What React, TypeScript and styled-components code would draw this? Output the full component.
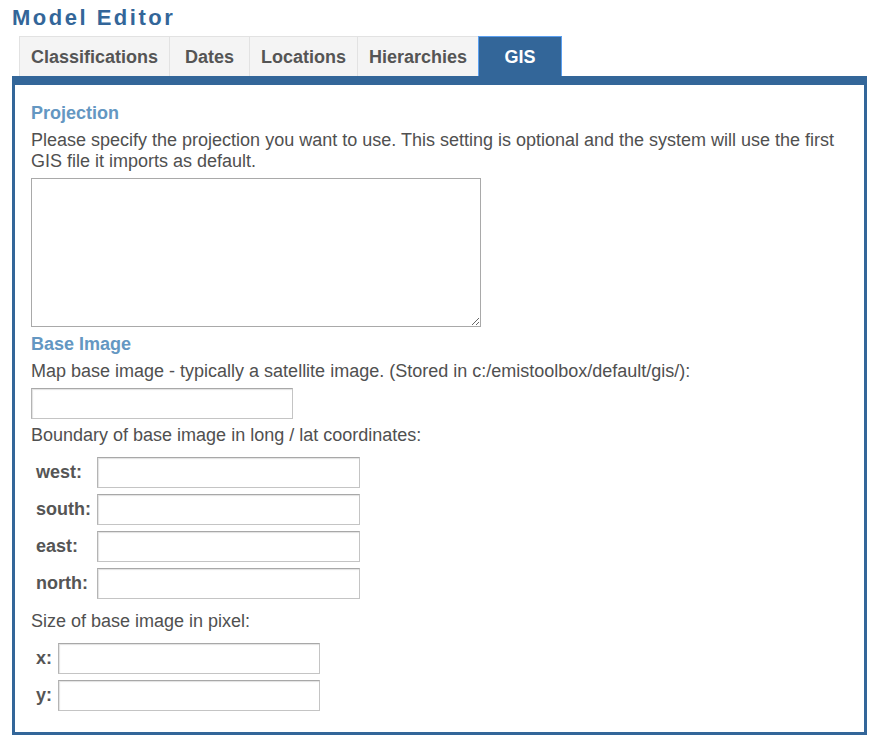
import { useState } from "react";
import styled, { createGlobalStyle } from "styled-components";

const GlobalStyle = createGlobalStyle`
  body {
    margin: 0;
    background: #fff;
    font-family: "Liberation Sans", Arial, sans-serif;
  }
`;

const TABS = ["Classifications", "Dates", "Locations", "Hierarchies", "GIS"];

const BOUNDS = ["west", "south", "east", "north"];
const SIZE = ["x", "y"];

export default function App() {
  const [activeTab, setActiveTab] = useState<string>("GIS");

  return (
    <>
      <GlobalStyle />
      <StyledPage>
        <Title>Model Editor</Title>
        <TabBar>
          {TABS.map((tab) => (
            <Tab key={tab} $active={tab === activeTab} onClick={() => setActiveTab(tab)}>
              {tab}
            </Tab>
          ))}
        </TabBar>
        <Panel>
          <Heading>Projection</Heading>
          <Text>
            Please specify the projection you want to use. This setting is optional and the system
            will use the first GIS file it imports as default.
          </Text>
          <Area />
          <Heading>Base Image</Heading>
          <Text>
            Map base image - typically a satellite image. (Stored in c:/emistoolbox/default/gis/):
          </Text>
          <Field type="text" $width={262} />
          <Text>Boundary of base image in long / lat coordinates:</Text>
          <FieldTable>
            <tbody>
              {BOUNDS.map((name) => (
                <tr key={name}>
                  <LabelCell>{name}:</LabelCell>
                  <InputCell>
                    <Field type="text" $width={263} />
                  </InputCell>
                </tr>
              ))}
            </tbody>
          </FieldTable>
          <Text className="spaced">Size of base image in pixel:</Text>
          <FieldTable>
            <tbody>
              {SIZE.map((name) => (
                <tr key={name}>
                  <LabelCell>{name}:</LabelCell>
                  <InputCell>
                    <Field type="text" $width={262} />
                  </InputCell>
                </tr>
              ))}
            </tbody>
          </FieldTable>
        </Panel>
      </StyledPage>
    </>
  );
}

const StyledPage = styled.div`
  padding: 0 0 0 12px;
  width: 855px;
`;

const Title = styled.div`
  font-size: 22px;
  font-weight: 700;
  line-height: 36px;
  letter-spacing: 2.5px;
  color: #336699;
`;

const TabBar = styled.div`
  display: flex;
  padding-left: 7px;
  height: 40px;
`;

const Tab = styled.div<{ $active?: boolean }>`
  box-sizing: border-box;
  min-width: ${(p) => (p.$active ? 84 : 81)}px;
  height: 40px;
  padding: 0 11px;
  margin-right: -1px;
  border: 1px solid ${(p) => (p.$active ? "#5a9ff0" : "#e2e2e2")};
  border-bottom: none;
  background: ${(p) => (p.$active ? "#336699" : "#f4f4f4")};
  color: ${(p) => (p.$active ? "#fff" : "#555")};
  font-size: 18px;
  font-weight: 700;
  line-height: 40px;
  text-align: center;
  overflow: hidden;
  cursor: pointer;
  position: relative;
  z-index: ${(p) => (p.$active ? 1 : 0)};
`;

const Panel = styled.div`
  box-sizing: border-box;
  width: 855px;
  border: 3px solid #336699;
  border-top-width: 9px;
  padding: 18px 16px 18px;
`;

const Heading = styled.div`
  font-size: 18px;
  font-weight: 700;
  line-height: 21px;
  color: #6497c2;
  margin-bottom: 6px;
`;

const Text = styled.p`
  margin: 0 0 6px;
  font-size: 18px;
  line-height: 21px;
  color: #505050;
  &.spaced {
    margin-top: 9px;
  }
`;

const Area = styled.textarea`
  display: block;
  box-sizing: border-box;
  width: 450px;
  height: 149px;
  margin: 0 0 7px;
  border: 1px solid #a9a9a9;
  font-family: "Liberation Sans", Arial, sans-serif;
  font-size: 16px;
`;

const Field = styled.input<{ $width: number }>`
  display: block;
  box-sizing: border-box;
  width: ${(p) => p.$width}px;
  height: 31px;
  margin: 0 0 6px;
  border: 1px solid #c4c4c4;
  border-top-color: #a8a8a8;
  border-left-color: #b4b4b4;
  box-shadow: inset 1px 1px 1px #e2e2e2;
  font-family: "Liberation Sans", Arial, sans-serif;
  font-size: 16px;
`;

const FieldTable = styled.table`
  border-collapse: collapse;
  margin-top: 8px;
`;

const LabelCell = styled.td`
  padding: 3px 6px 3px 5px;
  font-size: 18px;
  font-weight: 700;
  color: #555;
  white-space: nowrap;
`;

const InputCell = styled.td`
  padding: 3px 0;
  ${Field} {
    margin: 0;
  }
`;
